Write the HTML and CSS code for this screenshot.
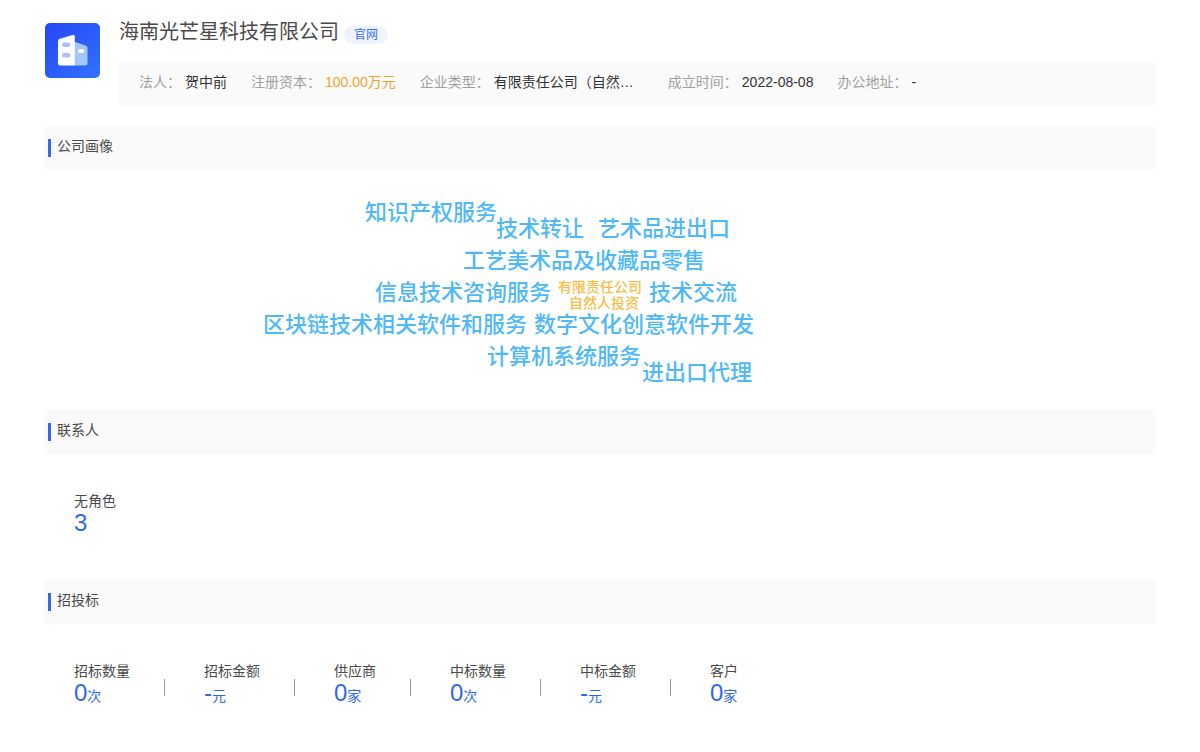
FILE: index.html
```html
<!DOCTYPE html>
<html lang="zh-CN">
<head>
<meta charset="utf-8">
<meta name="viewport" content="width=device-width, initial-scale=1">
<title>海南光芒星科技有限公司</title>
<link rel="stylesheet" href="styles.css">
</head>
<body>
<main class="page">
  <header class="company">
    <svg class="company-logo" viewBox="0 0 55 55" aria-hidden="true">
      <defs>
        <linearGradient id="logo-bg" x1="0" y1="0" x2="1" y2="1">
          <stop offset="0" stop-color="#2448f4"/>
          <stop offset="1" stop-color="#3370ff"/>
        </linearGradient>
      </defs>
      <rect width="55" height="55" rx="5" fill="url(#logo-bg)"/>
      <path d="M29 18.5 40.6 22.4Q42.5 23 42.5 25V40.5Q42.5 42.5 40.5 42.5H29Z" fill="#a3c6fb"/>
      <path d="M13 18.2Q13 16.4 14.8 15.8L27.8 12Q29.8 11.5 29.8 13.5V42.5H15Q13 42.5 13 40.5Z" fill="#fff"/>
      <rect x="17" y="19.5" width="8.500" height="4.500" rx="2.200" fill="#a9c0f8"/>
      <rect x="17" y="30" width="8.500" height="4.500" rx="2.200" fill="#a9c0f8"/>
      <rect x="33" y="26" width="6" height="4" rx="2" fill="#fff"/>
    </svg>
    <div class="company-body">
      <div class="company-heading">
        <h1 class="company-name">海南光芒星科技有限公司</h1>
        <a class="site-link" href="#">官网</a>
      </div>
      <dl class="facts">
        <div class="fact"><dt>法人：</dt><dd>贺中前</dd></div>
        <div class="fact"><dt>注册资本：</dt><dd class="capital">100.00万元</dd></div>
        <div class="fact"><dt>企业类型：</dt><dd class="type">有限责任公司（自然…</dd></div>
        <div class="fact"><dt>成立时间：</dt><dd>2022-08-08</dd></div>
        <div class="fact"><dt>办公地址：</dt><dd>-</dd></div>
      </dl>
    </div>
  </header>

  <section>
    <h2 class="section-title">公司画像</h2>
    <div class="cloud">
      <div class="cloud-stage">
        <span class="word w1">知识产权服务</span>
        <span class="word w2">技术转让</span>
        <span class="word w3">艺术品进出口</span>
        <span class="word w4">工艺美术品及收藏品零售</span>
        <span class="word w5">信息技术咨询服务</span>
        <span class="word minor w6">有限责任公司</span>
        <span class="word minor w7">自然人投资</span>
        <span class="word w8">技术交流</span>
        <span class="word w9">区块链技术相关软件和服务</span>
        <span class="word w10">数字文化创意软件开发</span>
        <span class="word w11">计算机系统服务</span>
        <span class="word w12">进出口代理</span>
      </div>
    </div>
  </section>

  <section>
    <h2 class="section-title">联系人</h2>
    <dl class="stats">
      <div class="stat"><dt>无角色</dt><dd>3</dd></div>
    </dl>
  </section>

  <section>
    <h2 class="section-title">招投标</h2>
    <dl class="stats">
      <div class="stat"><dt>招标数量</dt><dd>0<small>次</small></dd></div>
      <div class="stat"><dt>招标金额</dt><dd>-<small>元</small></dd></div>
      <div class="stat"><dt>供应商</dt><dd>0<small>家</small></dd></div>
      <div class="stat"><dt>中标数量</dt><dd>0<small>次</small></dd></div>
      <div class="stat"><dt>中标金额</dt><dd>-<small>元</small></dd></div>
      <div class="stat"><dt>客户</dt><dd>0<small>家</small></dd></div>
    </dl>
  </section>
</main>
</body>
</html>
```
FILE: styles.css
```css
* {
  box-sizing: border-box;
}

body {
  margin: 0;
  background: #fff;
  color: #4a4a4a;
  font-family: "Liberation Sans", "Noto Sans CJK SC", sans-serif;
  font-size: 14px;
  line-height: 20px;
}

h1, h2, dl, dd {
  margin: 0;
  font-weight: 400;
}

.page {
  padding: 17px 44px 24px;
}

.company {
  display: flex;
  gap: 19px;
  margin-bottom: 20px;
}

.company-logo {
  flex: none;
  width: 55px;
  height: 55px;
  margin: 6px 0 0 1px;
}

.company-body {
  flex: 1;
  min-width: 0;
}

.company-heading {
  display: flex;
  align-items: flex-end;
  gap: 5px;
  height: 30px;
  margin-bottom: 15px;
}

.company-name {
  font-size: 20px;
  line-height: 30px;
}

.site-link {
  padding: 0 10px;
  border-radius: 10px;
  margin-bottom: 3px;
  background: #eff3fd;
  color: #3a6cf0;
  font-size: 12px;
  line-height: 18px;
  text-decoration: none;
}

.facts {
  display: flex;
  gap: 24px;
  padding: 10px 20px 14px;
  background: #fafafa;
  white-space: nowrap;
}

.fact {
  display: flex;
  gap: 4px;
}

.fact dt {
  color: #a0a0a0;
}

.fact dd {
  color: #333;
}

.fact .capital {
  color: #efa42d;
}

.fact .type {
  width: 150px;
}

.section-title {
  display: flex;
  gap: 6px;
  padding: 10px 4px 13px;
  background: #fafafa;
  font-size: 14px;
  line-height: 20px;
}

.section-title::before {
  content: "";
  width: 3px;
  height: 18px;
  margin-top: 3px;
  background: #3168e8;
}

.cloud {
  display: flex;
  justify-content: center;
  height: 240px;
}

.cloud-stage {
  position: relative;
  width: 800px;
}

.word {
  position: absolute;
  color: #4fb9f8;
  font-size: 22px;
  font-weight: 500;
  line-height: 32px;
  white-space: nowrap;
}

.minor {
  color: #f8bd45;
  font-size: 14px;
  line-height: 16px;
}

.w1 { left: 165px; top: 27px; }
.w2 { left: 296px; top: 43px; }
.w3 { left: 398px; top: 43px; }
.w4 { left: 263px; top: 75px; }
.w5 { left: 175px; top: 107px; }
.w6 { left: 358px; top: 109px; }
.w7 { left: 369px; top: 125px; }
.w8 { left: 449px; top: 107px; }
.w9 { left: 63px; top: 139px; }
.w10 { left: 334px; top: 139px; }
.w11 { left: 287px; top: 171px; }
.w12 { left: 442px; top: 187px; }

.stats {
  display: flex;
  height: 126px;
  padding: 37px 30px;
}

.stat {
  display: flex;
  flex-direction: column;
  position: relative;
}

.stat + .stat {
  margin-left: 74px;
}

.stat + .stat::before {
  content: "";
  position: absolute;
  top: 18px;
  left: -40px;
  width: 1px;
  height: 17px;
  background: #999;
}

.stat dd {
  color: #3168e8;
  font-size: 24px;
  line-height: 24px;
}

.stat small {
  font-size: 14px;
}
```
